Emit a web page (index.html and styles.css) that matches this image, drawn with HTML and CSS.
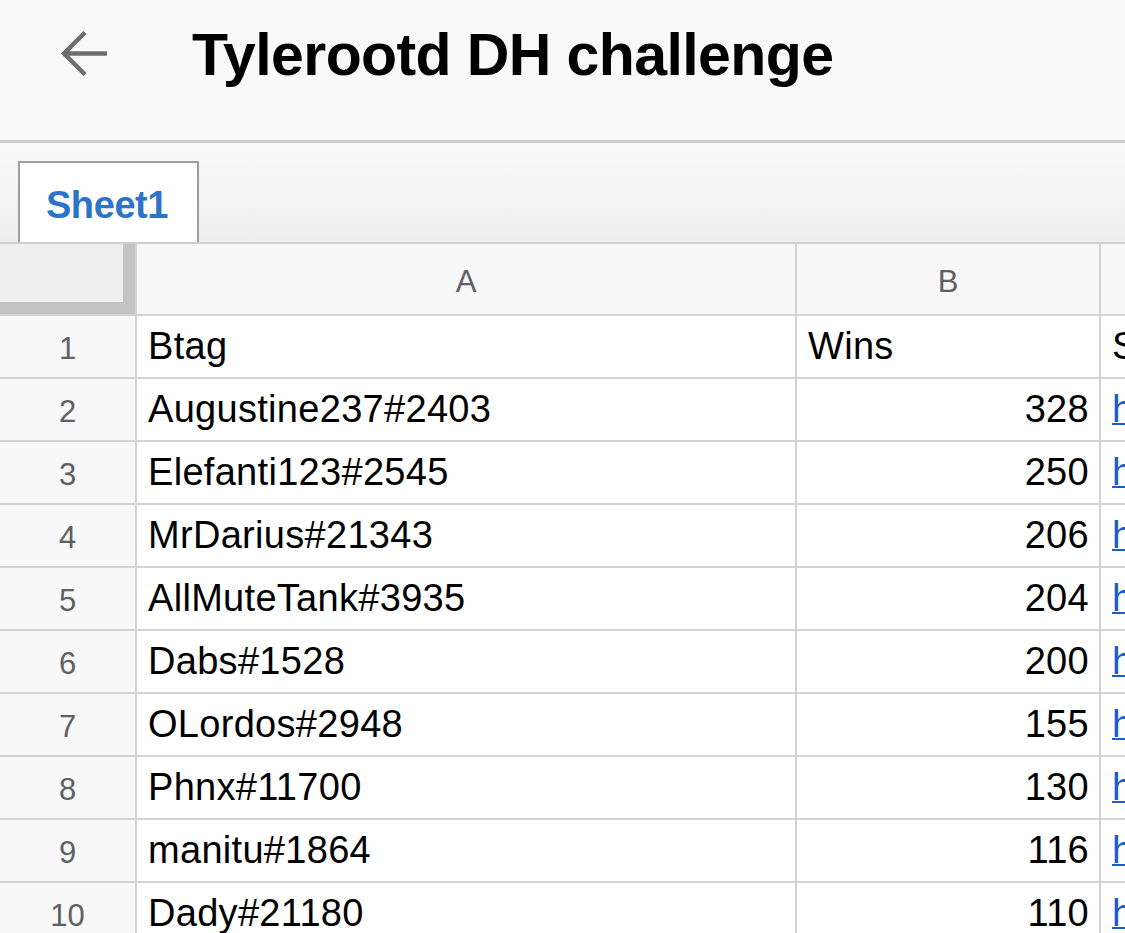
FILE: index.html
```html
<!DOCTYPE html>
<html>
<head>
<meta charset="utf-8">
<link rel="stylesheet" href="styles.css">
</head>
<body>
<header class="topbar">
  <svg class="back" width="48" height="48" viewBox="0 0 48 48" aria-hidden="true">
    <path d="M3 23.5H47" fill="none" stroke="#6e6e6e" stroke-width="4.5"/>
    <path d="M25 2.5L4 23.5L25 44.5" fill="none" stroke="#6e6e6e" stroke-width="4.5"/>
  </svg>
  <h1 class="title">Tylerootd DH challenge</h1>
</header>
<nav class="tabbar">
  <div class="tab">Sheet1</div>
</nav>
<main class="sheet">
  <div class="grid">
    <div class="corner"></div>
    <div class="colhead">A</div>
    <div class="colhead">B</div>
    <div class="colhead">C</div>

    <div class="rowhead">1</div><div class="cell">Btag</div><div class="cell">Wins</div><div class="cell">Screenshot</div>
    <div class="rowhead">2</div><div class="cell">Augustine237#2403</div><div class="cell num">328</div><div class="cell"><a class="link">https://imgur.com</a></div>
    <div class="rowhead">3</div><div class="cell">Elefanti123#2545</div><div class="cell num">250</div><div class="cell"><a class="link">https://imgur.com</a></div>
    <div class="rowhead">4</div><div class="cell">MrDarius#21343</div><div class="cell num">206</div><div class="cell"><a class="link">https://imgur.com</a></div>
    <div class="rowhead">5</div><div class="cell">AllMuteTank#3935</div><div class="cell num">204</div><div class="cell"><a class="link">https://imgur.com</a></div>
    <div class="rowhead">6</div><div class="cell">Dabs#1528</div><div class="cell num">200</div><div class="cell"><a class="link">https://imgur.com</a></div>
    <div class="rowhead">7</div><div class="cell">OLordos#2948</div><div class="cell num">155</div><div class="cell"><a class="link">https://imgur.com</a></div>
    <div class="rowhead">8</div><div class="cell">Phnx#11700</div><div class="cell num">130</div><div class="cell"><a class="link">https://imgur.com</a></div>
    <div class="rowhead">9</div><div class="cell">manitu#1864</div><div class="cell num">116</div><div class="cell"><a class="link">https://imgur.com</a></div>
    <div class="rowhead">10</div><div class="cell">Dady#21180</div><div class="cell num">110</div><div class="cell"><a class="link">https://imgur.com</a></div>
  </div>
</main>
</body>
</html>
```

FILE: styles.css
```css
html, body {
  margin: 0;
  padding: 0;
  width: 1125px;
  height: 933px;
  overflow: hidden;
  background: #ffffff;
  font-family: "Liberation Sans", Arial, Helvetica, sans-serif;
}

.topbar {
  box-sizing: border-box;
  height: 143px;
  padding: 0 0 30px 60px;
  display: flex;
  align-items: center;
  background: #f9f9f9;
  border-bottom: 3px solid #cbcbcb;
}

.back {
  flex: none;
  display: block;
  margin-top: -2px;
}

.title {
  margin: 0 0 0 84px;
  font-size: 59px;
  line-height: 61px;
  font-weight: bold;
  letter-spacing: -0.6px;
  color: #000;
}

.tabbar {
  box-sizing: border-box;
  height: 101px;
  display: flex;
  align-items: flex-end;
  padding-left: 18px;
  background: linear-gradient(#f9f9f9, #eeeeee);
  border-bottom: 2px solid #cfcfcf;
}

.tab {
  box-sizing: border-box;
  width: 181px;
  height: 81px;
  padding: 6px 3px 0 0;
  display: flex;
  align-items: center;
  justify-content: center;
  background: #ffffff;
  border: 2px solid #9e9e9e;
  border-bottom: none;
  color: #2b74c8;
  font-size: 38px;
  font-weight: bold;
  letter-spacing: -0.4px;
}

.sheet {
  overflow: hidden;
}

.grid {
  display: grid;
  grid-template-columns: 135px 658px 302px 400px;
  grid-template-rows: 70px;
  grid-auto-rows: 61px;
  gap: 2px;
  background: #d3d3d3;
  width: 1501px;
}

.corner {
  box-sizing: border-box;
  background: #efefef;
  border-right: 12px solid #c3c3c3;
  border-bottom: 12px solid #c3c3c3;
}

.colhead {
  box-sizing: border-box;
  padding-top: 6px;
  display: flex;
  align-items: center;
  justify-content: center;
  background: #f8f8f8;
  color: #5f6064;
  font-size: 31px;
}

.rowhead {
  box-sizing: border-box;
  padding-top: 5px;
  display: flex;
  align-items: center;
  justify-content: center;
  background: #f8f8f8;
  color: #5f6064;
  font-size: 31px;
}

.cell {
  box-sizing: border-box;
  padding: 0 10px 0 11px;
  display: flex;
  align-items: center;
  background: #ffffff;
  color: #000;
  font-size: 38px;
  letter-spacing: 0.3px;
  white-space: nowrap;
  overflow: hidden;
}

.num {
  justify-content: flex-end;
}

.link {
  color: #1a5ccc;
  text-decoration: underline;
  text-decoration-thickness: 2px;
}
```
